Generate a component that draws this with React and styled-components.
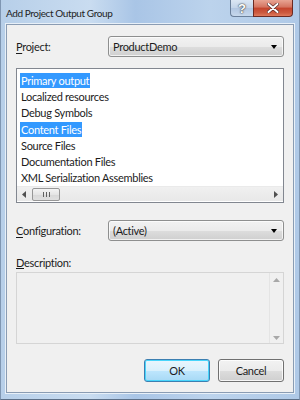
import styled, { createGlobalStyle } from "styled-components";

const GlobalStyle = createGlobalStyle`
  html, body { margin: 0; padding: 0; }
  body {
    width: 300px;
    height: 400px;
    overflow: hidden;
    font-family: Lato, "Liberation Sans", sans-serif;
  }
`;

const items = [
  { label: "Primary output", selected: true },
  { label: "Localized resources" },
  { label: "Debug Symbols" },
  { label: "Content Files", selected: true },
  { label: "Source Files" },
  { label: "Documentation Files" },
  { label: "XML Serialization Assemblies" },
];

export default function App() {
  return (
    <>
      <GlobalStyle />
      <Window>
        <TitleBar>
          <Title>Add Project Output Group</Title>
          <Caption>
            <HelpButton>?</HelpButton>
            <CloseButton>
              <svg width="12" height="10" viewBox="0 0 12 10">
                <path d="M1.5 1 L10.5 9 M10.5 1 L1.5 9" stroke="#4a2020" strokeWidth="3.2" strokeLinecap="round" />
                <path d="M1.5 1 L10.5 9 M10.5 1 L1.5 9" stroke="#fff" strokeWidth="2" strokeLinecap="round" />
              </svg>
            </CloseButton>
          </Caption>
        </TitleBar>
        <Client>
          <FieldRow>
            <Label><u>P</u>roject:</Label>
            <Combo>
              <span>ProductDemo</span>
              <Arrow />
            </Combo>
          </FieldRow>
          <ListBox>
            <Items>
              {items.map((it) => (
                <Item key={it.label}>
                  <ItemText $selected={it.selected}>{it.label}</ItemText>
                </Item>
              ))}
            </Items>
            <HScroll>
              <ScrollArrow>
                <svg width="4" height="7" viewBox="0 0 4 7"><path d="M4 0 L0 3.5 L4 7 Z" fill="#505050" /></svg>
              </ScrollArrow>
              <Thumb>
                <Grip />
              </Thumb>
              <Track />
              <ScrollArrow>
                <svg width="4" height="7" viewBox="0 0 4 7"><path d="M0 0 L4 3.5 L0 7 Z" fill="#505050" /></svg>
              </ScrollArrow>
            </HScroll>
          </ListBox>
          <FieldRow $top={17}>
            <Label><u>C</u>onfiguration:</Label>
            <Combo>
              <span>(Active)</span>
              <Arrow />
            </Combo>
          </FieldRow>
          <DescLabel><u>D</u>escription:</DescLabel>
          <DescBox>
            <DescText />
            <VScroll>
              <svg width="7" height="4" viewBox="0 0 7 4"><path d="M0 4 L3.5 0 L7 4 Z" fill="#a8a8a8" /></svg>
              <svg width="7" height="4" viewBox="0 0 7 4"><path d="M0 0 L3.5 4 L7 0 Z" fill="#a8a8a8" /></svg>
            </VScroll>
          </DescBox>
          <ButtonRow>
            <Button $default>OK</Button>
            <Button>Cancel</Button>
          </ButtonRow>
        </Client>
      </Window>
    </>
  );
}

const Window = styled.div`
  width: 300px;
  height: 400px;
  box-sizing: border-box;
  display: flex;
  flex-direction: column;
  background: linear-gradient(90deg, #b7cfe9 0%, #c9dcf0 30%, #a9c5e6 45%, #bcd3ec 70%, #afc9e7 100%);
  border-left: 1px solid #7f96b2;
  border-right: 1px solid #7f96b2;
  border-bottom: 1px solid #5d7088;
`;

const TitleBar = styled.div`
  height: 24px;
  display: flex;
  align-items: flex-start;
  padding: 0 6px 0 5px;
`;

const Title = styled.div`
  font-size: 10px;
  letter-spacing: -0.4px;
  color: #1e1e1e;
  margin-top: 7px;
`;

const Caption = styled.div`
  margin-left: auto;
  display: flex;
  height: 17px;
`;

const HelpButton = styled.div`
  width: 23px;
  height: 17px;
  box-sizing: border-box;
  border: 1px solid #6a7f9a;
  border-top: none;
  border-right: none;
  border-radius: 0 0 0 4px;
  background: linear-gradient(#dbe6f3, #c3d4e9 50%, #b1c6e1 51%, #c7d8ec);
  color: #fff;
  font: bold 13px "Liberation Sans", sans-serif;
  text-shadow: 0 0 2px #333, 0 0 1px #333;
  display: flex;
  align-items: center;
  justify-content: center;
  line-height: 1;
`;

const CloseButton = styled.div`
  width: 40px;
  height: 17px;
  box-sizing: border-box;
  border: 1px solid #6b2a22;
  border-top: none;
  border-radius: 0 0 4px 0;
  background: linear-gradient(#e8a493, #d4735f 45%, #c4432c 50%, #cc5a3f 80%, #e07a5c);
  display: flex;
  align-items: center;
  justify-content: center;
`;

const Client = styled.div`
  flex: 1;
  margin: 0 5px 6px 5px;
  border: 1px solid #8a9cb3;
  outline: 1px solid #e8f0f8;
  background: #f0f0f0;
  padding: 11px 9px 0 9px;
  display: flex;
  flex-direction: column;
  font-size: 11px;
  letter-spacing: -0.3px;
  color: #000;
`;

const FieldRow = styled.div`
  display: flex;
  align-items: center;
  margin-top: ${(p) => p.$top || 0}px;
`;

const Label = styled.div`
  width: 92px;
  color: #1c1c1c;
  u { text-decoration-thickness: 1px; text-underline-offset: 2px; }
`;

const Combo = styled.div`
  flex: 1;
  height: 21px;
  box-sizing: border-box;
  border: 1px solid #8e8f8f;
  border-radius: 3px;
  background: linear-gradient(#f2f2f2, #ebebeb 50%, #dddddd 51%, #cfcfcf);
  box-shadow: inset 0 0 0 1px rgba(255, 255, 255, 0.7);
  display: flex;
  align-items: center;
  padding: 0 6px 0 4px;
  color: #1c1c1c;
`;

const Arrow = styled.div`
  margin-left: auto;
  width: 0;
  height: 0;
  border-left: 3.5px solid transparent;
  border-right: 3.5px solid transparent;
  border-top: 4px solid #000;
`;

const ListBox = styled.div`
  margin-top: 11px;
  height: 135px;
  box-sizing: border-box;
  border: 1px solid #828790;
  background: #fff;
  display: flex;
  flex-direction: column;
`;

const Items = styled.div`
  flex: 1;
  padding: 3px 0 0 3px;
`;

const Item = styled.div`
  height: 16.3px;
  display: flex;
  align-items: center;
`;

const ItemText = styled.span`
  padding: 0 1px;
  line-height: 15px;
  background: ${(p) => (p.$selected ? "#3399ff" : "transparent")};
  color: ${(p) => (p.$selected ? "#fff" : "#1c1c1c")};
`;

const HScroll = styled.div`
  height: 14px;
  margin: 0 0 1px 0;
  display: flex;
  align-items: center;
  background: linear-gradient(#f0f0f0, #e8e8e8);
  border-top: 1px solid #eaeaea;
`;

const ScrollArrow = styled.div`
  width: 14px;
  height: 14px;
  display: flex;
  align-items: center;
  justify-content: center;
`;

const Thumb = styled.div`
  width: 28px;
  height: 13px;
  box-sizing: border-box;
  margin-left: 1px;
  border: 1px solid #979797;
  border-radius: 2px;
  background: linear-gradient(#f3f3f3, #e5e5e5 50%, #d8d8d8 51%, #e0e0e0);
  display: flex;
  align-items: center;
  justify-content: center;
`;

const Grip = styled.div`
  width: 7px;
  height: 5px;
  background: repeating-linear-gradient(90deg, #606060 0 1px, transparent 1px 3px);
`;

const Track = styled.div`
  flex: 1;
`;

const DescLabel = styled.div`
  margin-top: 14px;
  color: #1c1c1c;
  line-height: 16px;
`;

const DescBox = styled.div`
  margin-top: 1px;
  height: 72px;
  box-sizing: border-box;
  border: 1px solid #d5d5d5;
  background: #f0f0f0;
  display: flex;
`;

const DescText = styled.div`
  flex: 1;
`;

const VScroll = styled.div`
  width: 13px;
  border-left: 1px solid #e4e4e4;
  display: flex;
  flex-direction: column;
  align-items: center;
  justify-content: space-between;
  padding: 5px 0 3px;
`;

const ButtonRow = styled.div`
  margin-top: 15px;
  display: flex;
  justify-content: flex-end;
  gap: 8px;
`;

const Button = styled.div`
  width: 66px;
  height: 23px;
  box-sizing: border-box;
  border: 1px solid ${(p) => (p.$default ? "#3c7fb1" : "#707070")};
  border-radius: 3px;
  background: ${(p) =>
    p.$default
      ? "linear-gradient(#eaf6fd, #d9f0fc 50%, #bee6fd 51%, #a7d9f5)"
      : "linear-gradient(#f2f2f2, #ebebeb 50%, #dddddd 51%, #cfcfcf)"};
  box-shadow: inset 0 0 0 1px ${(p) => (p.$default ? "#48d5fb" : "rgba(255,255,255,0.8)")};
  display: flex;
  align-items: center;
  justify-content: center;
  color: #1c1c1c;
`;
